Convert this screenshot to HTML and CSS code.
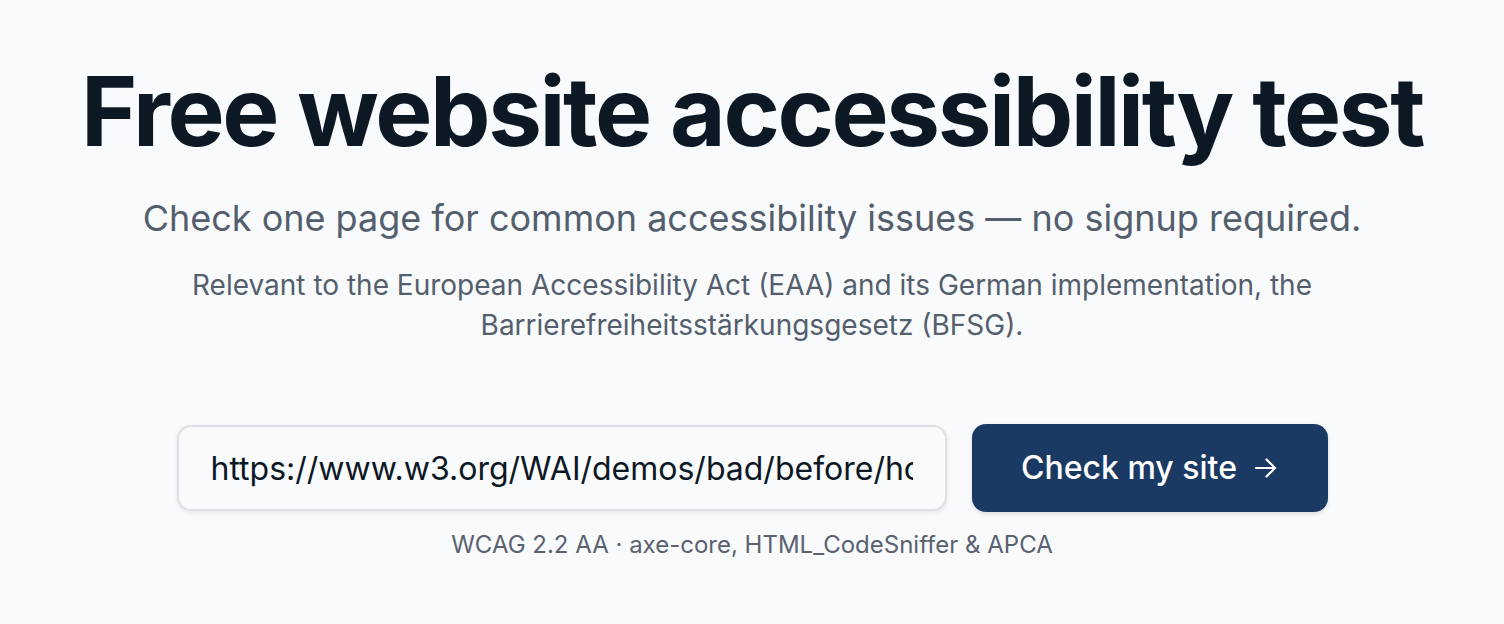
FILE: index.html
```html
<!DOCTYPE html>
<html lang="en">
<head>
<meta charset="utf-8">
<title>Free website accessibility test</title>
<link rel="stylesheet" href="styles.css">
</head>
<body>
<main class="hero">
  <h1 class="title">Free website accessibility test</h1>
  <p class="subtitle">Check one page for common accessibility issues — no signup required.</p>
  <p class="lead">Relevant to the European Accessibility Act (EAA) and its German implementation, the Barrierefreiheitsstärkungsgesetz (BFSG).</p>
  <form class="check-form">
    <input class="url-input" type="text" value="https://www.w3.org/WAI/demos/bad/before/home.html" aria-label="Website URL">
    <button class="check-btn" type="button">Check my site
      <svg class="arrow" width="24" height="24" viewBox="0 0 24 24" fill="none" stroke="currentColor" stroke-width="2.2" stroke-linecap="round" stroke-linejoin="round"><path d="M2 12h19"/><path d="M12.5 3.5l8.5 8.5-8.5 8.5"/></svg>
    </button>
  </form>
  <p class="note">WCAG 2.2 AA · axe-core, HTML_CodeSniffer &amp; APCA</p>
</main>
</body>
</html>
```
FILE: styles.css
```css
* { box-sizing: border-box; }
html, body { margin: 0; padding: 0; }
body {
  background: #f8fafc;
  font-family: Inter, "Noto Sans", sans-serif;
  color: #0d1824;
}
.hero {
  display: flex;
  flex-direction: column;
  align-items: center;
  text-align: center;
  padding-top: 54px;
}
.title {
  margin: 0;
  font-size: 96px;
  font-weight: 700;
  letter-spacing: -2.4px;
  line-height: 1.2;
  color: #0c1824;
}
.subtitle {
  margin: 26px 0 0;
  font-size: 36px;
  line-height: 1.3;
  color: #545e6c;
}
.lead {
  margin: 23px 0 0;
  max-width: 1140px;
  font-size: 28px;
  line-height: 40px;
  color: #545e6c;
}
.check-form {
  display: flex;
  gap: 25px;
  margin-top: 79px;
  align-items: center;
}
.url-input {
  width: 770px;
  height: 86px;
  border: 2px solid #dde1e7;
  border-radius: 14px;
  background: #f8fafc;
  padding: 2px 32px 0;
  font-family: Inter, sans-serif;
  font-size: 32px;
  color: #0d1824;
  box-shadow: 0 2px 4px rgba(15, 23, 42, 0.08);
  outline: none;
}
.check-btn {
  display: flex;
  align-items: center;
  justify-content: center;
  gap: 17px;
  height: 88px;
  width: 356px;
  padding: 0;
  border: 0;
  border-radius: 14px;
  background: #1b3a63;
  color: #fff;
  font-family: Inter, sans-serif;
  font-size: 32px;
  font-weight: 500;
  box-shadow: 0 2px 4px rgba(15, 23, 42, 0.12);
  cursor: pointer;
}
.arrow { flex: none; }
.note {
  margin: 16px 0 0;
  font-size: 24px;
  line-height: 1.4;
  color: #5a6270;
}
```
